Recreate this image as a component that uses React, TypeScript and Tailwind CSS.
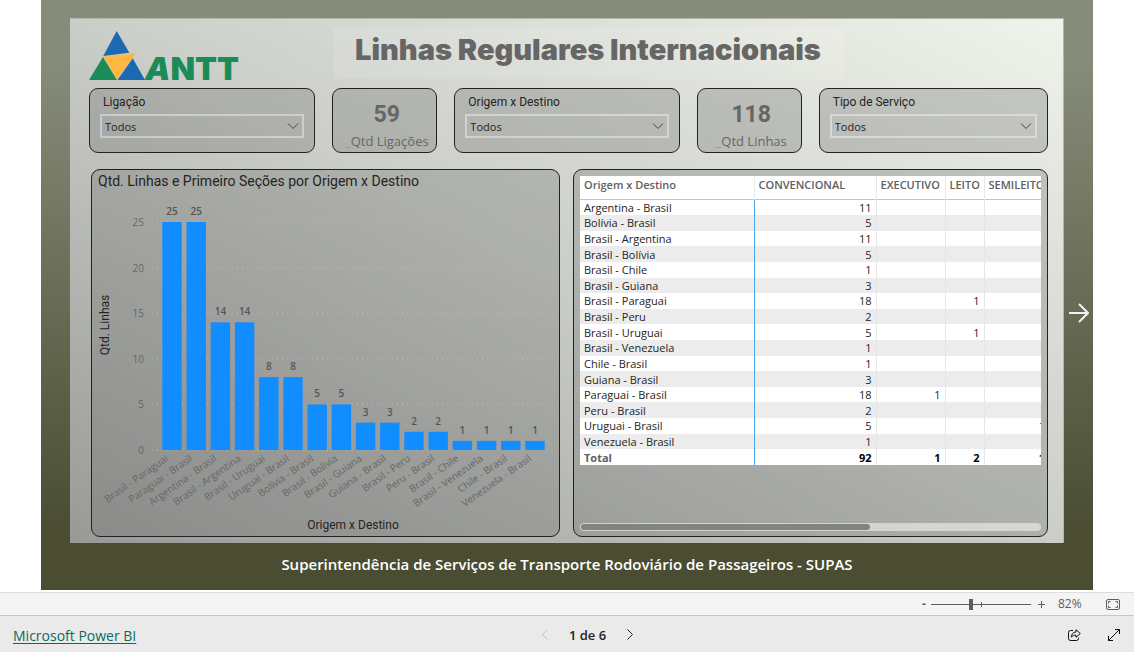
import { useState } from "react";

interface Row {
  name: string;
  values: (number | null)[];
}

const routes: { name: string; total: number }[] = [
  { name: "Brasil - Paraguai", total: 25 },
  { name: "Paraguai - Brasil", total: 25 },
  { name: "Argentina - Brasil", total: 14 },
  { name: "Brasil - Argentina", total: 14 },
  { name: "Brasil - Uruguai", total: 8 },
  { name: "Uruguai - Brasil", total: 8 },
  { name: "Bolívia - Brasil", total: 5 },
  { name: "Brasil - Bolívia", total: 5 },
  { name: "Brasil - Guiana", total: 3 },
  { name: "Guiana - Brasil", total: 3 },
  { name: "Brasil - Peru", total: 2 },
  { name: "Peru - Brasil", total: 2 },
  { name: "Brasil - Chile", total: 1 },
  { name: "Brasil - Venezuela", total: 1 },
  { name: "Chile - Brasil", total: 1 },
  { name: "Venezuela - Brasil", total: 1 },
];

const columns = ["CONVENCIONAL", "EXECUTIVO", "LEITO", "SEMILEITO"];

const rows: Row[] = [
  { name: "Argentina - Brasil", values: [11, null, null, null] },
  { name: "Bolívia - Brasil", values: [5, null, null, null] },
  { name: "Brasil - Argentina", values: [11, null, null, null] },
  { name: "Brasil - Bolívia", values: [5, null, null, null] },
  { name: "Brasil - Chile", values: [1, null, null, null] },
  { name: "Brasil - Guiana", values: [3, null, null, null] },
  { name: "Brasil - Paraguai", values: [18, null, 1, null] },
  { name: "Brasil - Peru", values: [2, null, null, null] },
  { name: "Brasil - Uruguai", values: [5, null, 1, null] },
  { name: "Brasil - Venezuela", values: [1, null, null, null] },
  { name: "Chile - Brasil", values: [1, null, null, null] },
  { name: "Guiana - Brasil", values: [3, null, null, null] },
  { name: "Paraguai - Brasil", values: [18, 1, null, null] },
  { name: "Peru - Brasil", values: [2, null, null, null] },
  { name: "Uruguai - Brasil", values: [5, null, null, 1] },
  { name: "Venezuela - Brasil", values: [1, null, null, null] },
];

const totals = [92, 1, 2, 1];

const card = "rounded-[9px] border border-[#222] bg-[#6a6a6a]/30";

function Logo() {
  return (
    <svg className="w-[154px] h-[57px] shrink-0" viewBox="0 0 154 57" role="img" aria-label="ANTT">
      <path d="M27.7 0L14.3 25l26-3.300z" fill="#1b68b3" />
      <path d="M14 26L0 49h28z" fill="#1b8c58" />
      <path d="M43.700 27.300L56 49H28.500z" fill="#1b68b3" />
      <path d="M14.500 25.500L46.700 22.300L27.700 48.500z" fill="#ffb83f" />
      <text x="56" y="49" fill="#1b8c58" fontFamily="Inter, sans-serif" fontWeight="900" fontSize="32">
        <tspan fontStyle="italic">A</tspan>NTT
      </text>
    </svg>
  );
}

function Slicer({ id, label }: { id: string; label: string }) {
  return (
    <div className={`${card} px-[10px] pt-[5px] h-[65px]`}>
      <label htmlFor={id} className="block pl-[3px] font-[Roboto,sans-serif] text-[12px] leading-[16px] text-[#252423]">
        {label}
      </label>
      <div className="relative mt-1">
        <select
          id={id}
          className="block w-full h-6 pl-[3px] pt-px appearance-none border-2 border-white/40 bg-transparent text-[11px] leading-[18px] text-[#252423]"
        >
          <option>Todos</option>
        </select>
        <svg
          className="absolute right-[5px] top-2 w-3 h-2 pointer-events-none"
          viewBox="0 0 12 8"
          fill="none"
          stroke="#444"
        >
          <path d="M1 1.500l5 5 5-5" />
        </svg>
      </div>
    </div>
  );
}

function Kpi({ value, label }: { value: number; label: string }) {
  return (
    <div className={`${card} h-[65px] pt-3 pl-1 text-center`}>
      <p className="font-[Roboto,sans-serif] font-bold text-[23px] leading-[28px] text-[#666]">{value}</p>
      <p className="text-[13px] leading-[24px] text-[#666]">
        <span className="text-[#999]">_</span>
        {label}
      </p>
    </div>
  );
}

function BarChart() {
  const base = 258;
  const unit = 9.12;
  return (
    <svg className="block w-full" viewBox="0 0 467 344" fontSize="10">
      {[0, 5, 10, 15, 20, 25].map((tick) => (
        <g key={tick}>
          <line
            x1="60"
            x2="461"
            y1={base - tick * unit}
            y2={base - tick * unit}
            stroke="#c8c8c8"
            strokeOpacity="0.7"
            strokeDasharray="1 4"
          />
          <text x="52" y={base - tick * unit + 4} textAnchor="end" fill="#666">
            {tick}
          </text>
        </g>
      ))}
      {routes.map((route, i) => {
        const center = 80 + i * 24.2;
        const top = base - route.total * unit;
        return (
          <g key={route.name}>
            <rect x={center - 9.7} y={top} width="19.4" height={route.total * unit} fill="#118dff" />
            <text x={center} y={top - 7} textAnchor="middle" fill="#555" fontWeight="600">
              {route.total}
            </text>
            <text
              transform={`translate(${center - 3} ${base + 10}) rotate(-35)`}
              textAnchor="end"
              fill="#666"
            >
              {route.name}
            </text>
          </g>
        );
      })}
      <g fill="#252423" fontFamily="Roboto, sans-serif" fontSize="12" textAnchor="middle">
        <text x="261" y="337">Origem x Destino</text>
        <text transform="translate(17 133) rotate(-90)">Qtd. Linhas</text>
      </g>
    </svg>
  );
}

function RouteTable() {
  return (
    <div className="overflow-hidden">
      <table className="table-fixed w-[470px] h-[289px] border-collapse bg-white text-[11px] leading-[14px] text-[#252423]">
        <colgroup>
          <col className="w-[174px]" />
          <col className="w-[122px]" />
          <col className="w-[69px]" />
          <col className="w-[39px]" />
          <col />
        </colgroup>
        <thead>
          <tr className="h-[23px] text-left text-[#606060] border-b border-[#9fcbf5]">
            <th className="pl-1 pb-1 font-semibold border-r border-[#e8e8e8]">Origem x Destino</th>
            {columns.map((column) => (
              <th key={column} className="pl-1 pb-1 font-semibold border-r border-r-[#e8e8e8]">
                {column}
              </th>
            ))}
          </tr>
        </thead>
        <tbody>
          {rows.map((row) => (
            <tr key={row.name} className="even:bg-[#ececec]">
              <td className="pl-1 pt-px pb-0 border-r border-[#4aa5f5]">{row.name}</td>
              {row.values.map((value, i) => (
                <td key={columns[i]} className="pr-1 pt-px pb-0 text-right border-r border-[#e6e6e6]">
                  {value}
                </td>
              ))}
            </tr>
          ))}
          <tr className="font-bold text-black">
            <td className="pl-1 pt-px pb-0 text-[#606060] border-r border-[#4aa5f5]">Total</td>
            {totals.map((value, i) => (
              <td key={columns[i]} className="pr-1 pt-px pb-0 text-right border-r border-[#e6e6e6]">
                {value}
              </td>
            ))}
          </tr>
        </tbody>
      </table>
    </div>
  );
}

export default function App() {
  const [zoom, setZoom] = useState(40);

  return (
    <div className="bg-white font-['Open_Sans','Noto_Sans',sans-serif]">
      <main className="mx-[41px] mb-0.5 pt-[18px] bg-linear-to-b from-[#878b7a] from-10% via-[#696d57] via-50% to-[#4a4d32] to-90%">
        <div className="flex">
          <div className="flex-1 min-w-0 ml-[29px] pl-[19px] pr-[15px] pt-2 pb-[6px] border-t border-r border-[#b4b8ab] bg-linear-to-tr from-[#989a97] via-[#cbcec8] to-[#f0f3eb]">
            <header className="flex h-[61px]">
              <div className="w-[244px] pt-1">
                <Logo />
              </div>
              <h1 className="w-[510px] h-[52px] bg-white/10 text-center font-[Inter,sans-serif] font-black text-[29px] leading-[46px] text-[#666] whitespace-nowrap">
                Linhas Regulares Internacionais
              </h1>
            </header>
            <div className="grid grid-cols-[226fr_105fr_225fr_105fr_229fr] gap-[17px]">
              <Slicer id="ligacao" label="Ligação" />
              <Kpi value={59} label="Qtd Ligações" />
              <Slicer id="origem" label="Origem x Destino" />
              <Kpi value={118} label="Qtd Linhas" />
              <Slicer id="servico" label="Tipo de Serviço" />
            </div>
            <div className="grid grid-cols-[minmax(0,469fr)_minmax(0,475fr)] gap-[13px] mt-4 pl-0.5">
              <section className={card}>
                <h2 className="pl-[6px] font-[Roboto,sans-serif] text-[14px] leading-[22px] text-[#252423]">
                  Qtd. Linhas e Primeiro Seções por Origem x Destino
                </h2>
                <BarChart />
              </section>
              <section className={`${card} flex flex-col justify-between p-[6px] pb-[5px]`}>
                <RouteTable />
                <div className="h-2 p-px rounded-full bg-white/50">
                  <div className="h-[6px] w-[63%] rounded-full bg-[#82847f]" />
                </div>
              </section>
            </div>
          </div>
          <div className="w-[29px] shrink-0 pt-[277px]">
            <button aria-label="Próxima" className="flex w-full h-9 items-center justify-center">
              <svg className="w-5 h-5" viewBox="0 0 20 20" fill="none" stroke="#f2f2f2" strokeWidth="2">
                <path d="M0 10h19M10 1l9 9-9 9" />
              </svg>
            </button>
          </div>
        </div>
        <p className="pb-1 text-center font-semibold text-[15px] leading-[43px] text-white">
          Superintendência de Serviços de Transporte Rodoviário de Passageiros - SUPAS
        </p>
      </main>

      <div className="flex h-[23px] items-center justify-end pr-[14px] border-t border-[#dedede] bg-[#f4f4f4] text-[#605e5c] text-[12px]">
        <button aria-label="Reduzir" className="w-[14px] font-bold">-</button>
        <div className="relative flex items-center w-[100px]">
          <input
            type="range"
            aria-label="Zoom"
            value={zoom}
            onChange={(e) => setZoom(Number(e.target.value))}
            className="w-full h-3 appearance-none bg-transparent [&::-webkit-slider-runnable-track]:h-px [&::-webkit-slider-runnable-track]:bg-[#605e5c] [&::-webkit-slider-thumb]:appearance-none [&::-webkit-slider-thumb]:w-1 [&::-webkit-slider-thumb]:h-[11px] [&::-webkit-slider-thumb]:-mt-[5px] [&::-webkit-slider-thumb]:bg-[#605e5c]"
          />
          <span className="absolute left-1/2 w-px h-[5px] bg-[#605e5c] pointer-events-none" />
        </div>
        <button aria-label="Ampliar" className="w-5 flex justify-center">
          <svg className="w-[9px] h-[9px]" viewBox="0 0 9 9" stroke="#605e5c">
            <path d="M1 4.500h7M4.500 1v7" />
          </svg>
        </button>
        <span className="w-[30px] ml-[7px]">82%</span>
        <button aria-label="Ajustar à página" className="ml-[18px]">
          <svg className="block w-[14px] h-[11px]" viewBox="0 0 14 11" fill="none" stroke="#605e5c">
            <rect x="0.500" y="0.500" width="13" height="10" rx="1.500" />
            <path d="M2.500 4.500v-2h2M9.500 2.500h2v2M11.500 6.500v2h-2M4.500 8.500h-2v-2" />
          </svg>
        </button>
      </div>

      <footer className="grid grid-cols-[1fr_auto_1fr] h-[37px] items-center pl-[13px] pr-[14px] border-t border-[#c6c6c6] bg-[#eaeaea] pt-px">
        <div>
          <a href="https://powerbi.microsoft.com" className="text-[14px] leading-[20px] text-[#0b6a5f] underline underline-offset-2">
            Microsoft Power BI
          </a>
        </div>
        <nav className="flex items-center gap-[21px] pl-[42px]">
          <button aria-label="Página anterior" disabled>
            <svg className="block w-[6px] h-[11px]" viewBox="0 0 6 11" fill="none" stroke="#bdbdbd">
              <path d="M5.500 0.500l-5 5 5 5" />
            </svg>
          </button>
          <span className="font-semibold text-[13px] leading-[20px] text-[#252423]">1 de 6</span>
          <button aria-label="Próxima página">
            <svg className="block w-[6px] h-[11px]" viewBox="0 0 6 11" fill="none" stroke="#252423">
              <path d="M0.500 0.500l5 5-5 5" />
            </svg>
          </button>
        </nav>
        <div className="flex items-center justify-end gap-[27px]">
          <button aria-label="Compartilhar">
            <svg className="block w-[13px] h-3" viewBox="0 0 13 12" fill="none" stroke="#111" strokeLinejoin="round">
              <path d="M5 1.500H2.500a2 2 0 0 0-2 2v6a2 2 0 0 0 2 2h6a2 2 0 0 0 2-2V8.500" />
              <path d="M8 0.700l4.300 3.800L8 8.300V6.200C5.800 6.200 4.400 6.800 3.300 8.200 3.500 5.300 5 3.200 8 2.900z" />
            </svg>
          </button>
          <button aria-label="Tela inteira">
            <svg className="block w-3 h-3" viewBox="0 0 12 12" fill="none" stroke="#111">
              <path d="M7 0.500h4.500V5M11.500 0.500l-11 11M5 11.500H0.500V7" />
            </svg>
          </button>
        </div>
      </footer>
    </div>
  );
}
